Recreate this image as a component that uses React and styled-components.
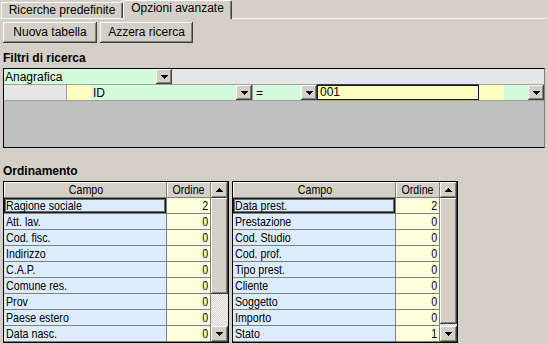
import React from 'react';
import styled, { createGlobalStyle, css } from 'styled-components';

const GlobalStyle = createGlobalStyle`
  html, body { margin: 0; padding: 0; background: #d4d0c8; }
  body { font-family: "Liberation Sans", Arial, sans-serif; font-size: 12px; color: #000; }
  #root { width: 547px; height: 344px; overflow: hidden; }
`;

const raised = css`
  background: #d4d0c8;
  box-shadow: inset -1px -1px #404040, inset 1px 1px #ffffff, inset -2px -2px #808080, inset 2px 2px #d4d0c8;
`;

const Window = styled.div`
  display: flex;
  flex-direction: column;
  width: 547px;
  height: 344px;
`;

const TabBar = styled.div`
  display: flex;
  align-items: flex-end;
  height: 18px;
  padding-left: 1px;
  border-bottom: 1px solid #fff;
`;

const Tab = styled.div`
  box-sizing: border-box;
  width: ${p => p.$w}px;
  height: ${p => (p.$active ? 19 : 16)}px;
  margin-bottom: ${p => (p.$active ? -1 : 0)}px;
  background: #d4d0c8;
  border-top: 1px solid #fff;
  border-left: 1px solid #fff;
  border-right: 1px solid #404040;
  box-shadow: inset -1px 0 #808080;
  border-top-left-radius: 2px;
  border-top-right-radius: 2px;
  text-align: center;
  line-height: 15px;
  white-space: nowrap;
`;

const Toolbar = styled.div`
  display: flex;
  gap: 3px;
  padding-left: 3px;
  margin-top: 3px;
`;

const Button = styled.div`
  box-sizing: border-box;
  width: ${p => p.$w}px;
  height: 21px;
  line-height: 20px;
  text-align: center;
  ${raised};
`;

const SectionLabel = styled.div`
  font-weight: bold;
  font-size: 12px;
  height: 16px;
  line-height: 16px;
  padding-left: 3px;
  margin-top: ${p => p.$mt}px;
`;

const FilterBox = styled.div`
  box-sizing: border-box;
  width: 542px;
  height: 80px;
  margin-left: 3px;
  margin-top: 2px;
  background: #c0c0c0;
  border: 1px solid #000;
  border-right-color: #808080;
  display: flex;
  flex-direction: column;
`;

const FilterRow = styled.div`
  display: flex;
  box-sizing: border-box;
  height: 16px;
  border-bottom: 1px solid #a0a0a0;
`;

const tones = {
  green: '#d4fcdc',
  gray: '#e6e6e6',
  yellow: '#ffffc0',
};

const FCell = styled.div`
  box-sizing: border-box;
  width: ${p => (p.$w ? `${p.$w}px` : 'auto')};
  flex: ${p => (p.$grow ? 1 : 'none')};
  height: 15px;
  display: flex;
  align-items: center;
  background: ${p => tones[p.$tone]};
  border-left: ${p => (p.$sep ? '1px solid #a0a0a0' : 'none')};
  font-size: 12px;
  padding-left: ${p => p.$pl || 0}px;
  white-space: nowrap;
`;

const CellText = styled.span`
  flex: 1;
`;

const DropBtn = styled.div`
  box-sizing: border-box;
  width: 16px;
  height: 15px;
  flex: none;
  display: flex;
  align-items: center;
  justify-content: center;
  ${raised};
`;

const InputBox = styled.div`
  box-sizing: border-box;
  width: 162px;
  height: 15px;
  flex: none;
  background: #ffffc0;
  border: 1px solid #14143c;
  box-shadow: 0 -1px 0 #404050;
  font-size: 12px;
  line-height: 13px;
  padding-left: 2px;
`;

const Tables = styled.div`
  display: flex;
  gap: 3px;
  padding-left: 3px;
  margin-top: 2px;
`;

const Table = styled.div`
  box-sizing: border-box;
  width: 226px;
  height: 162px;
  border: 1px solid #000;
  display: flex;
  background: #d4d0c8;
`;

const Grid = styled.div`
  width: 207px;
  display: flex;
  flex-direction: column;
`;

const Row = styled.div`
  display: flex;
  height: 16px;
`;

const HeadCell = styled.div`
  box-sizing: border-box;
  width: ${p => p.$w}px;
  height: 16px;
  background: #d4d0c8;
  box-shadow: inset -1px -1px #808080, inset 1px 1px #fff;
  display: flex;
  justify-content: center;
  line-height: 15px;
`;

const DataCell = styled.div`
  box-sizing: border-box;
  width: ${p => p.$w}px;
  height: 16px;
  background: ${p => (p.$num ? '#ffffdc' : '#ddecfd')};
  border-right: 1px solid #808080;
  border-bottom: 1px solid #808080;
  display: flex;
  justify-content: ${p => (p.$num ? 'flex-end' : 'flex-start')};
  padding: 0 2px;
  line-height: 15px;
  white-space: nowrap;
  overflow: hidden;
  ${p =>
    p.$focus &&
    css`
      box-shadow: inset 0 0 0 1px #1a1a1a, inset 0 0 0 2px #6a6a6a;
    `}
`;

/* Arial Narrow look: Liberation Sans horizontally condensed */
const Narrow = styled.span`
  display: inline-block;
  font-size: 13px;
  transform: scaleX(0.82);
  transform-origin: ${p => p.$origin || 'left'} center;
  white-space: nowrap;
`;

const ScrollBar = styled.div`
  width: 17px;
  display: flex;
  flex-direction: column;
`;

const ScrollBtn = styled.div`
  height: 16px;
  flex: none;
  display: flex;
  align-items: center;
  justify-content: center;
  ${raised};
`;

const Thumb = styled.div`
  height: ${p => p.$h}px;
  flex: none;
  ${raised};
`;

const Track = styled.div`
  flex: 1;
  background: repeating-conic-gradient(#ffffff 0 25%, #d4d0c8 0 50%) 0 0 / 2px 2px;
`;

const ArrowDown = () => (
  <svg width="7" height="4" viewBox="0 0 7 4" shapeRendering="crispEdges">
    <path d="M0 0h7v1H0zM1 1h5v1H1zM2 2h3v1H2zM3 3h1v1H3z" fill="#000" />
  </svg>
);

const ArrowUp = () => (
  <svg width="7" height="4" viewBox="0 0 7 4" shapeRendering="crispEdges">
    <path d="M3 0h1v1H3zM2 1h3v1H2zM1 2h5v1H1zM0 3h7v1H0z" fill="#000" />
  </svg>
);

const leftRows = [
  ['Ragione sociale', 2],
  ['Att. lav.', 0],
  ['Cod. fisc.', 0],
  ['Indirizzo', 0],
  ['C.A.P.', 0],
  ['Comune res.', 0],
  ['Prov', 0],
  ['Paese estero', 0],
  ['Data nasc.', 0],
];

const rightRows = [
  ['Data prest.', 2],
  ['Prestazione', 0],
  ['Cod. Studio', 0],
  ['Cod. prof.', 0],
  ['Tipo prest.', 0],
  ['Cliente', 0],
  ['Soggetto', 0],
  ['Importo', 0],
  ['Stato', 1],
];

const OrderTable = ({ rows, thumb }) => (
  <Table>
    <Grid>
      <Row>
        <HeadCell $w={163}><Narrow $origin="center">Campo</Narrow></HeadCell>
        <HeadCell $w={44}><Narrow $origin="center">Ordine</Narrow></HeadCell>
      </Row>
      {rows.map(([name, ord], i) => (
        <Row key={name}>
          <DataCell $w={163} $focus={i === 0}><Narrow>{name}</Narrow></DataCell>
          <DataCell $w={44} $num><Narrow $origin="right">{ord}</Narrow></DataCell>
        </Row>
      ))}
    </Grid>
    <ScrollBar>
      <ScrollBtn><ArrowUp /></ScrollBtn>
      <Thumb $h={thumb} />
      <Track />
      <ScrollBtn><ArrowDown /></ScrollBtn>
    </ScrollBar>
  </Table>
);

export default function App() {
  return (
    <>
      <GlobalStyle />
      <Window>
        <TabBar>
          <Tab $w={122}>Ricerche predefinite</Tab>
          <Tab $w={109} $active>Opzioni avanzate</Tab>
        </TabBar>
        <Toolbar>
          <Button $w={94}>Nuova tabella</Button>
          <Button $w={93}>Azzera ricerca</Button>
        </Toolbar>
        <SectionLabel $mt={7}>Filtri di ricerca</SectionLabel>
        <FilterBox>
          <FilterRow>
            <FCell $w={168} $tone="green" $pl={1}>
              <CellText>Anagrafica</CellText>
              <DropBtn><ArrowDown /></DropBtn>
            </FCell>
            <FCell $grow $tone="gray" />
          </FilterRow>
          <FilterRow>
            <FCell $w={62} $tone="gray" />
            <FCell $w={25} $tone="yellow" $sep />
            <FCell $w={161} $tone="green" $pl={2}>
              <CellText>ID</CellText>
              <DropBtn><ArrowDown /></DropBtn>
            </FCell>
            <FCell $w={65} $tone="green" $pl={3} $sep>
              <CellText>=</CellText>
              <DropBtn><ArrowDown /></DropBtn>
            </FCell>
            <InputBox>001</InputBox>
            <FCell $w={25} $tone="yellow" />
            <FCell $grow $tone="green">
              <CellText />
              <DropBtn><ArrowDown /></DropBtn>
            </FCell>
          </FilterRow>
        </FilterBox>
        <SectionLabel $mt={15}>Ordinamento</SectionLabel>
        <Tables>
          <OrderTable rows={leftRows} thumb={96} />
          <OrderTable rows={rightRows} thumb={126} />
        </Tables>
      </Window>
    </>
  );
}
